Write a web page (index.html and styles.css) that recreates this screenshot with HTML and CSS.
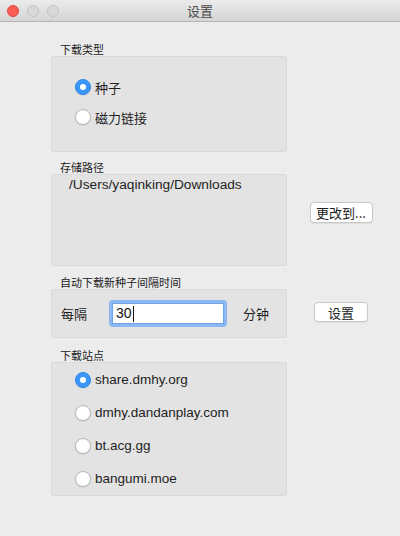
FILE: index.html
```html
<!DOCTYPE html>
<html lang="zh">
<head>
<meta charset="utf-8">
<title>设置</title>
<link rel="stylesheet" href="styles.css">
</head>
<body>
<div class="window">
  <div class="titlebar">
    <div class="lights">
      <span class="light red"></span>
      <span class="light gray"></span>
      <span class="light gray"></span>
    </div>
    <div class="title">设置</div>
  </div>
  <div class="content">
    <div class="section s1">
      <div class="group">
        <div class="label">下载类型</div>
        <div class="box box1">
          <div class="radio-row"><span class="radio on"></span><span class="rtext">种子</span></div>
          <div class="radio-row"><span class="radio"></span><span class="rtext">磁力链接</span></div>
        </div>
      </div>
    </div>
    <div class="section s2">
      <div class="group">
        <div class="label">存储路径</div>
        <div class="box box2">
          <div class="path">/Users/yaqinking/Downloads</div>
        </div>
      </div>
      <div class="side side-top">
        <button class="btn btn-change">更改到...</button>
      </div>
    </div>
    <div class="section s3">
      <div class="group">
        <div class="label">自动下载新种子间隔时间</div>
        <div class="box box3">
          <span class="every">每隔</span>
          <div class="input-ring"><div class="input">30<span class="caret"></span></div></div>
          <span class="minutes">分钟</span>
        </div>
      </div>
      <div class="side side-bottom">
        <button class="btn btn-set">设置</button>
      </div>
    </div>
    <div class="section s4">
      <div class="group">
        <div class="label">下载站点</div>
        <div class="box box4">
          <div class="site-row"><span class="radio on"></span><span class="stext">share.dmhy.org</span></div>
          <div class="site-row"><span class="radio"></span><span class="stext">dmhy.dandanplay.com</span></div>
          <div class="site-row"><span class="radio"></span><span class="stext">bt.acg.gg</span></div>
          <div class="site-row"><span class="radio"></span><span class="stext">bangumi.moe</span></div>
        </div>
      </div>
    </div>
  </div>
</div>
</body>
</html>
```
FILE: styles.css
```css
* { box-sizing: border-box; }
html, body { margin: 0; padding: 0; }
body {
  width: 400px;
  height: 536px;
  background: #ececec;
  font-family: "Liberation Sans", "Noto Sans CJK SC", sans-serif;
  color: #1e1e1e;
  overflow: hidden;
}
.window { width: 400px; height: 536px; background: #ececec; }
.titlebar {
  height: 22px;
  background: linear-gradient(#ebebeb, #d5d5d5);
  border-bottom: 1px solid #b4b4b4;
  display: flex;
  align-items: center;
  position: relative;
}
.lights { display: flex; gap: 8px; padding-left: 7px; }
.light { width: 12px; height: 12px; border-radius: 50%; display: block; }
.light.red { background: #fc5e57; border: 1px solid #e0443e; }
.light.gray { background: #d9d9d9; border: 1px solid #c4c4c4; }
.title {
  position: absolute;
  left: 0; right: 0; top: 0;
  text-align: center;
  line-height: 22px;
  font-family: "Noto Sans CJK SC", sans-serif;
  font-size: 13px;
  color: #4a4a4a;
}
.content { padding-left: 51px; padding-top: 20px; }
.section { display: flex; }
.s2 { margin-top: 8px; }
.s3 { margin-top: 9px; }
.s4 { margin-top: 10px; }
.group { width: 236px; }
.label {
  font-family: "Noto Sans CJK SC", sans-serif;
  font-size: 11px;
  line-height: 14px;
  height: 14px;
  padding-left: 9px;
  color: #222;
}
.box {
  background: #e3e3e3;
  border: 1px solid #dadada;
  border-radius: 2px;
}
.box1 { height: 96px; padding-top: 15px; }
.box2 { height: 92px; padding: 2px 0 0 17px; }
.box3 { height: 49px; display: flex; align-items: center; padding-left: 9px; }
.box4 { height: 134px; padding-top: 0; }
.radio-row, .site-row { display: flex; align-items: center; padding-left: 23px; }
.radio-row { height: 30px; }
.site-row { height: 33px; }
.radio {
  width: 16px; height: 16px; border-radius: 50%;
  background: #fff;
  border: 1px solid #b8b8b8;
  box-shadow: 0 0.5px 1px rgba(0,0,0,0.12);
  position: relative;
  flex: none;
}
.radio.on { background: #3a97f9; border-color: #3088ee; }
.radio.on::after {
  content: "";
  position: absolute;
  width: 6px; height: 6px; border-radius: 50%;
  background: #fff;
  left: 4px; top: 4px;
}
.rtext {
  margin-left: 4px;
  font-family: "Noto Sans CJK SC", sans-serif;
  font-size: 13px;
  color: #1e1e1e;
}
.stext {
  margin-left: 4px;
  font-size: 13.5px;
  color: #1e1e1e;
}
.path { font-size: 13.7px; line-height: 16px; color: #1e1e1e; }
.every, .minutes {
  font-family: "Noto Sans CJK SC", sans-serif;
  font-size: 13px;
}
.input-ring {
  margin-left: 22px;
  padding: 3px;
  border-radius: 4px;
  background: #8cb9f2;
}
.input {
  width: 112px; height: 21px;
  background: #fff;
  border: 1px solid #6ea4ea;
  font-size: 14px;
  line-height: 19px;
  padding-left: 3px;
  display: flex;
  align-items: center;
  color: #111;
}
.caret { width: 1px; height: 16px; background: #111; margin-left: 1px; }
.minutes { margin-left: 16px; }
.side { width: 108px; display: flex; justify-content: center; }
.side-top { align-items: flex-start; padding-top: 42px; }
.side-bottom { align-items: flex-start; padding-top: 27px; }
.btn {
  font-family: "Noto Sans CJK SC", sans-serif;
  font-size: 13px;
  background: #fff;
  border: 1px solid #c8c8c8;
  border-radius: 4px;
  box-shadow: 0 1px 0 rgba(0,0,0,0.06);
  color: #222;
  padding: 0;
  line-height: 19px;
}
.btn-change { width: 63px; height: 21px; }
.btn-set { width: 54px; height: 20px; }
```
